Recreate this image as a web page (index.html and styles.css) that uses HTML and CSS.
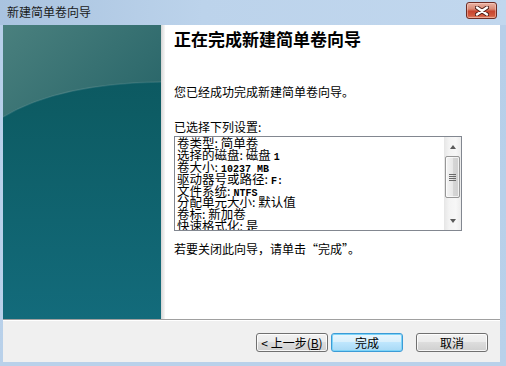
FILE: index.html
```html
<!DOCTYPE html>
<html lang="zh-CN">
<head>
<meta charset="utf-8">
<title>新建简单卷向导</title>
<link rel="stylesheet" href="styles.css">
</head>
<body>
<div class="window">
  <div class="titlebar">
    <span class="title">新建简单卷向导</span>
    <div class="close">
      <svg width="14" height="10" viewBox="0 0 14 10">
        <path d="M2 1.5 L12 8.5 M12 1.5 L2 8.5" stroke="#4a1d16" stroke-width="4.2" stroke-linecap="round"/>
        <path d="M2 1.5 L12 8.5 M12 1.5 L2 8.5" stroke="#ffffff" stroke-width="2.4" stroke-linecap="round"/>
      </svg>
    </div>
  </div>
  <div class="client">
    <div class="main">
      <div class="side">
        <svg width="158" height="294" viewBox="0 0 158 294">
          <defs>
            <linearGradient id="lower" x1="0" y1="0" x2="0" y2="1">
              <stop offset="0" stop-color="#0b555d"/>
              <stop offset="0.3" stop-color="#0d5c64"/>
              <stop offset="1" stop-color="#136b7b"/>
            </linearGradient>
            <linearGradient id="upper" x1="0" y1="0" x2="1" y2="0.6">
              <stop offset="0" stop-color="#4a807e"/>
              <stop offset="1" stop-color="#2c686b"/>
            </linearGradient>
          </defs>
          <rect width="158" height="294" fill="url(#lower)"/>
          <path d="M0 0 H158 V57 C80 58 30 74 0 92 Z" fill="url(#upper)"/>
          <path d="M0 92 C30 74 80 58 158 57" fill="none" stroke="rgba(255,255,255,0.10)" stroke-width="1.5"/>
        </svg>
      </div>
      <div class="shade"></div>
      <div class="content">
        <h1 class="heading">正在完成新建简单卷向导</h1>
        <p class="intro">您已经成功完成新建简单卷向导。</p>
        <p class="label">已选择下列设置:</p>
        <div class="listbox">
          <div class="list-text">
            <div class="row">卷类型: 简单卷</div>
            <div class="row">选择的磁盘: 磁盘 <span class="mono">1</span></div>
            <div class="row">卷大小: <span class="mono">10237 MB</span></div>
            <div class="row">驱动器号或路径: <span class="mono">F:</span></div>
            <div class="row">文件系统: <span class="mono">NTFS</span></div>
            <div class="row">分配单元大小: 默认值</div>
            <div class="row">卷标: 新加卷</div>
            <div class="row">快速格式化: 是</div>
          </div>
          <div class="scrollbar">
            <div class="sb-btn"><span class="arrow-up"></span></div>
            <div class="sb-track">
              <div class="thumb"><span class="grip"></span></div>
            </div>
            <div class="sb-btn"><span class="arrow-down"></span></div>
          </div>
        </div>
        <p class="closing">若要关闭此向导，请单击“完成”。</p>
      </div>
    </div>
    <div class="footer">
      <button class="btn btn-back">&lt; 上一步(<u>B</u>)</button>
      <button class="btn btn-default">完成</button>
      <button class="btn btn-cancel">取消</button>
    </div>
  </div>
</div>
</body>
</html>
```
FILE: styles.css
```css
html, body {
  margin: 0;
  padding: 0;
}

body {
  width: 506px;
  height: 366px;
  overflow: hidden;
  font-family: "Noto Sans CJK SC", "Microsoft YaHei", sans-serif;
  font-size: 12px;
  color: #000;
  background: #b9d1ea;
}

.window {
  width: 506px;
  height: 366px;
  display: flex;
  flex-direction: column;
  background: linear-gradient(180deg, #c4d9ef 0px, #b7cfe9 25px, #b9d1ea 100%);
}

.titlebar {
  height: 25px;
  display: flex;
  align-items: center;
  justify-content: space-between;
  padding: 0 9px 0 7px;
  background: linear-gradient(90deg, #a9c3df 0%, #bcd3eb 40%, #c1d7ee 100%);
}

.title {
  font-size: 12px;
  line-height: 16px;
  color: #1a1a1a;
  margin-top: -2px;
}

.close {
  width: 29px;
  height: 15px;
  margin-top: -4px;
  border: 1px solid #6d2c24;
  border-radius: 3px;
  display: flex;
  align-items: center;
  justify-content: center;
  background: linear-gradient(180deg, #eab3a4 0%, #d98a76 40%, #c7452f 55%, #d25a3f 85%, #e08a6c 100%);
  box-shadow: inset 0 0 0 1px rgba(255, 220, 210, 0.45);
}

.client {
  flex: 1;
  margin: 0 6px 4px 3px;
  display: flex;
  flex-direction: column;
  background: #f0f0f0;
}

.main {
  height: 294px;
  display: flex;
  background: #fff;
}

.side {
  width: 158px;
  height: 294px;
  flex: none;
}

.side svg {
  display: block;
}

.shade {
  width: 4px;
  flex: none;
  background: linear-gradient(90deg, #d4d4d4, #e6e6e6 50%, #f7f7f7);
}

.content {
  flex: 1;
  padding: 4px 0 0 9px;
  background: #fff;
}

.heading {
  margin: 0;
  font-size: 17px;
  line-height: 20px;
  font-weight: bold;
}

.intro {
  margin: 35px 0 0;
  line-height: 16px;
}

.label {
  margin: 19px 0 0;
  line-height: 16px;
}

.listbox {
  margin-top: 1px;
  width: 286px;
  height: 93px;
  border: 1px solid #828790;
  display: flex;
  overflow: hidden;
}

.list-text {
  flex: 1;
  padding: 0 0 0 2px;
  font-size: 12.5px;
  overflow: hidden;
  white-space: nowrap;
}

.row {
  height: 11.9px;
  line-height: 12px;
  display: flex;
  align-items: baseline;
}

.mono {
  font-family: "Liberation Mono", "DejaVu Sans Mono", monospace;
  font-size: 10px;
  line-height: 12px;
  font-weight: bold;
  margin-left: 3px;
}

.scrollbar {
  width: 17px;
  flex: none;
  display: flex;
  flex-direction: column;
  background: linear-gradient(90deg, #e6e6e6, #f3f3f3 30%, #f7f7f7 70%, #ececec);
}

.sb-btn {
  height: 17px;
  display: flex;
  align-items: center;
  justify-content: center;
  flex: none;
}

.arrow-up {
  width: 0;
  height: 0;
  border-left: 3.5px solid transparent;
  border-right: 3.5px solid transparent;
  border-bottom: 4px solid #5a5a5a;
  margin-top: 2px;
}

.arrow-down {
  width: 0;
  height: 0;
  border-left: 3.5px solid transparent;
  border-right: 3.5px solid transparent;
  border-top: 4px solid #5a5a5a;
  margin-bottom: 2px;
}

.sb-track {
  flex: 1;
  padding-top: 2px;
}

.thumb {
  width: 13px;
  height: 40px;
  margin-left: 1px;
  border: 1px solid #979797;
  border-radius: 2px;
  background: linear-gradient(90deg, #f4f4f4, #e8e8e8 50%, #d6d6d6 51%, #d0d0d0);
  box-shadow: inset 0 0 0 1px rgba(255, 255, 255, 0.7);
  display: flex;
  align-items: center;
  justify-content: center;
}

.grip {
  width: 7px;
  height: 7px;
  background: repeating-linear-gradient(180deg, #6a6a6a 0, #6a6a6a 1px, transparent 1px, transparent 2px);
}

.closing {
  margin: 10px 0 0;
  line-height: 16px;
}

.footer {
  flex: 1;
  border-top: 1px solid #a0a0a0;
  box-shadow: inset 0 1px 0 #fff;
  display: flex;
  align-items: flex-start;
  justify-content: flex-end;
  padding: 13px 12px 0 0;
}

.btn {
  height: 19px;
  width: 72px;
  padding: 0;
  margin: 0;
  font-family: "Noto Sans CJK SC", "Microsoft YaHei", sans-serif;
  font-size: 12px;
  line-height: 15px;
  color: #000;
  text-align: center;
  border: 1px solid #707070;
  border-radius: 3px;
  background: linear-gradient(180deg, #f2f2f2 0%, #ebebeb 45%, #dddddd 50%, #cfcfcf 100%);
  box-shadow: inset 0 0 0 1px rgba(255, 255, 255, 0.8);
}

.btn u {
  text-decoration: underline;
}

.btn-default {
  margin-left: 3px;
  border-color: #3c9bd6;
  background: linear-gradient(180deg, #eaf6fd 0%, #d9f0fc 45%, #bee6fd 50%, #a7d9f5 100%);
  box-shadow: inset 0 0 0 1px #7dd4f8;
}

.btn-cancel {
  margin-left: 13px;
}
```
